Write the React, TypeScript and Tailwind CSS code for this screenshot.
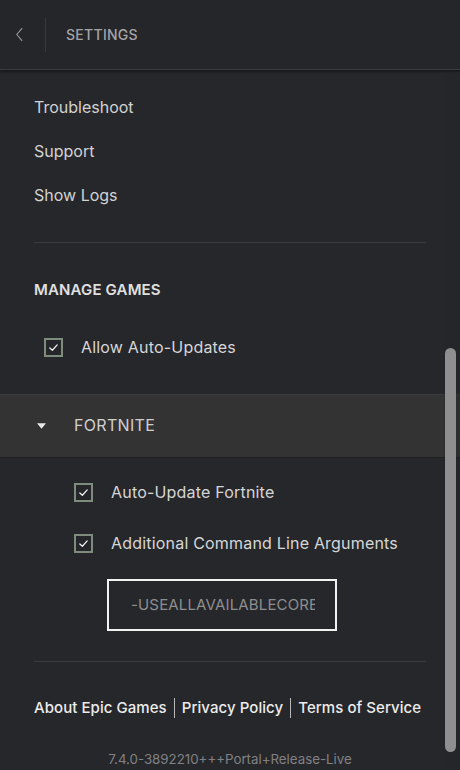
import React from 'react';

const font = { fontFamily: 'Inter, "Noto Sans", sans-serif' };

function Check() {
  return (
    <span className="flex h-[19px] w-[19px] shrink-0 items-center justify-center border-2 border-[#7e8c7e] bg-[#25262a]">
      <svg viewBox="0 0 12 12" className="h-[11px] w-[11px]" fill="none" stroke="#f0f0f0" strokeWidth="1.4" strokeLinecap="round" strokeLinejoin="round">
        <path d="M2 6.5 L4.8 9 L10 3.2" />
      </svg>
    </span>
  );
}

function CheckRow({ label, className = '' }: { label: string; className?: string }) {
  return (
    <div className={`flex h-[44px] items-center gap-[18px] ${className}`}>
      <Check />
      <span className="text-[16px] tracking-[0.012em] text-[#d6d6d6]">{label}</span>
    </div>
  );
}

export default function App() {
  return (
    <div className="relative h-[770px] w-[460px] overflow-hidden bg-[#26272b]" style={font}>
      {/* Header */}
      <header className="flex h-[70px] items-center border-b border-[#3a3b3f] bg-[#25262a] shadow-[0_2px_2px_rgba(0,0,0,0.35)]">
        <div className="flex w-[45px] items-center justify-center">
          <svg viewBox="0 0 10 16" className="h-[15px] w-[9px] -translate-x-[3px]" fill="none" stroke="#9a9a9e" strokeWidth="1.2">
            <path d="M8 1 L2 8 L8 15" />
          </svg>
        </div>
        <div className="h-[34px] w-px bg-[#37383c]" />
        <span className="ml-[20px] text-[14px] font-medium tracking-[0.02em] text-[#a4a4a7]">SETTINGS</span>
      </header>

      {/* Links */}
      <div className="px-[34px] pt-[15px]">
        {['Troubleshoot', 'Support', 'Show Logs'].map((l) => (
          <div key={l} className="flex h-[44px] items-center text-[16px] text-[#d2d2d2]">
            {l}
          </div>
        ))}
        <div className="mt-[25px] h-px bg-[#3a3b3f]" />
        <div className="mt-[25px] flex h-[44px] items-center text-[15px] font-semibold tracking-[0.01em] text-[#e0e0e0]">
          MANAGE GAMES
        </div>
        <CheckRow label="Allow Auto-Updates" className="mt-[13px] pl-[10px]" />
      </div>

      {/* Fortnite row */}
      <div className="mt-[25px] flex h-[64px] items-center border-t border-b border-t-[#3b3b3d] border-b-[#1f1f22] bg-[#333333]">
        <svg viewBox="0 0 10 6" className="ml-[37px] h-[6px] w-[9px]" fill="#e8e8e8">
          <path d="M0 0 H10 L5 6 Z" />
        </svg>
        <span className="ml-[28px] -translate-y-[1px] text-[16px] tracking-[0.02em] text-[#d0d0d0]">FORTNITE</span>
      </div>

      <div className="pl-[74px]">
        <CheckRow label="Auto-Update Fortnite" className="mt-[12px]" />
        <CheckRow label="Additional Command Line Arguments" className="mt-[7px]" />
        <div className="ml-[33px] mt-[14px] flex h-[52px] w-[230px] items-center overflow-hidden border-2 border-[#f2f2f2] pl-[22px] pr-[20px]">
          <span className="min-w-0 overflow-hidden whitespace-nowrap text-[15px] tracking-[0.01em] text-[#8e8e8e]">-USEALLAVAILABLECORES</span>
        </div>
      </div>

      <div className="mx-[34px] mt-[30px] h-px bg-[#3a3b3f]" />

      {/* Footer */}
      <div className="mt-[24px] flex h-[44px] items-center pl-[34px] text-[15px] font-medium tracking-[0.004em] text-[#ececec]">
        <span>About Epic Games</span>
        <span className="mx-[7px] h-[20px] w-px bg-[#b8b8b8]" />
        <span>Privacy Policy</span>
        <span className="mx-[7px] h-[20px] w-px bg-[#b8b8b8]" />
        <span>Terms of Service</span>
      </div>
      <div className="mt-[18px] flex h-[24px] w-[460px] items-center justify-center text-[13.3px] text-[#818183]">
        7.4.0-3892210+++Portal+Release-Live
      </div>

      {/* Scrollbar */}
      <div className="absolute right-0 top-[72px] bottom-0 w-[16px] bg-[#242529]/40">
        <div className="absolute left-[1px] top-[276px] h-[404px] w-[11px] rounded-full bg-[#8f8f8f]" />
      </div>
    </div>
  );
}
